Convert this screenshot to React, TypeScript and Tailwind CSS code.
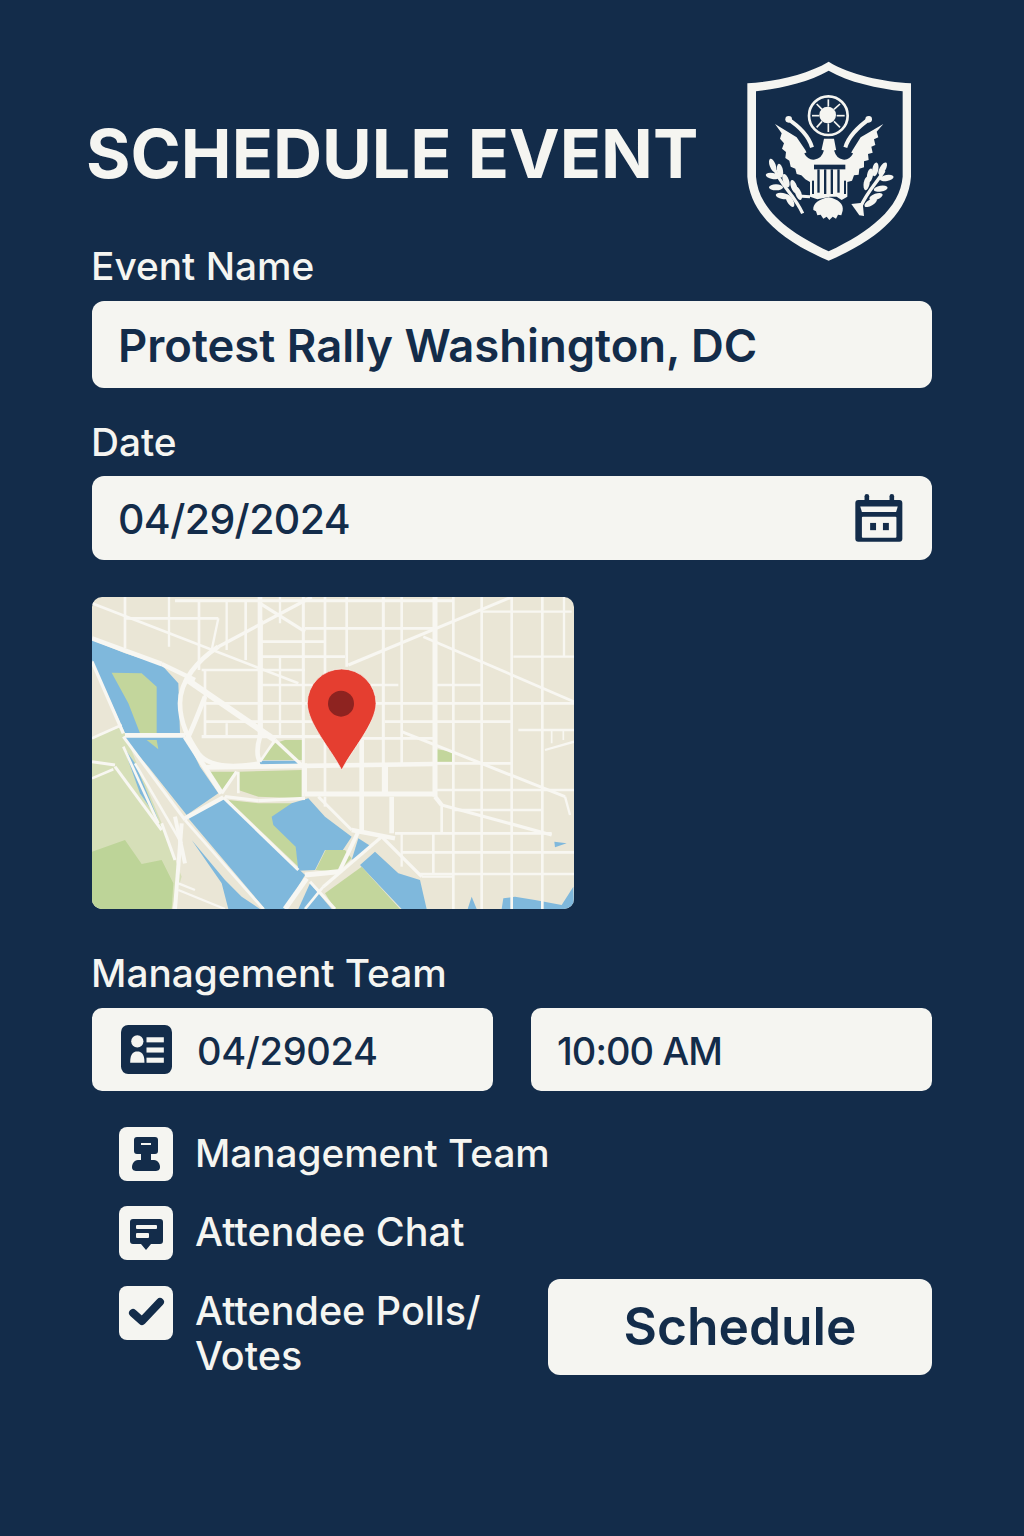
const NAVY = '#132c4a';
const PAPER = '#f5f5f1';
const ROAD = '#f8f7f2';

// street segments in map coords: [x1, y1, x2, y2, width]
const streets: number[][] = [
  // verticals
  [120, 21, 120, 175, 8], [252, 21, 252, 170, 7], [342, 30, 342, 240, 8], [425, 30, 425, 180, 7], [425, 400, 425, 440, 7],
  [482, 30, 482, 210, 8], [525, 21, 525, 440, 14], [585, 21, 585, 100, 7], [530, 90, 530, 440, 7], [585, 200, 585, 440, 7],
  [655, 21, 655, 620, 9], [720, 21, 720, 610, 8], [785, 21, 785, 230, 8], [830, 450, 830, 720, 14], [895, 21, 895, 610, 9],
  [950, 21, 950, 520, 8], [1050, 21, 1050, 620, 15], [1105, 21, 1105, 957, 8], [1190, 21, 1190, 957, 8], [1280, 21, 1280, 957, 8],
  [1372, 21, 1372, 957, 8], [1437, 21, 1437, 200, 7], [1435, 420, 1435, 450, 5], [1400, 420, 1400, 460, 5],
  [920, 620, 920, 730, 14], [1045, 730, 1045, 850, 8], [950, 730, 950, 830, 7], [1070, 640, 1070, 730, 8], [900, 530, 900, 610, 18],
  [360, 240, 360, 440, 8], [720, 620, 720, 650, 8], [660, 520, 660, 610, 12], [460, 545, 460, 610, 8],
  // horizontals
  [270, 32, 1105, 32, 9], [120, 85, 400, 85, 8], [660, 115, 1050, 115, 8], [530, 155, 720, 155, 8], [1190, 65, 1460, 65, 7],
  [530, 200, 780, 200, 8], [1285, 200, 1467, 200, 7], [350, 240, 660, 240, 8], [530, 285, 940, 285, 8], [1050, 285, 1190, 285, 7],
  [360, 340, 1467, 340, 8], [360, 395, 720, 395, 8], [900, 395, 1280, 395, 8], [120, 436, 300, 436, 14], [350, 440, 720, 440, 10],
  [720, 445, 1050, 445, 8], [1300, 420, 1467, 420, 7], [1380, 480, 1467, 455, 7], [360, 532, 1050, 522, 14], [1050, 520, 1280, 520, 8],
  [660, 612, 1050, 612, 15], [1050, 600, 1467, 600, 8], [1105, 660, 1372, 660, 7], [930, 730, 1400, 730, 8],
  [950, 787, 1467, 787, 8], [1000, 852, 1467, 852, 8], [21, 515, 90, 525, 9], [21, 565, 85, 538, 8],
  // diagonals
  [21, 40, 640, 280, 8], [21, 145, 230, 222, 14], [230, 222, 330, 270, 13], [300, 265, 570, 450, 18],
  [525, 40, 660, 125, 10], [400, 170, 680, 21, 10], [790, 225, 1280, 21, 9], [1015, 140, 1467, 335, 8], [950, 425, 1440, 620, 9],
  [1440, 620, 1455, 675, 7], [1050, 620, 1070, 645, 13], [1070, 645, 1400, 735, 10], [400, 85, 380, 180, 7],
  [570, 450, 525, 515, 8], [570, 450, 650, 525, 10], [300, 440, 410, 610, 15], [455, 545, 410, 610, 10], [21, 215, 115, 430, 10],
  [110, 405, 21, 445, 8], [115, 440, 300, 690, 9], [115, 470, 220, 700, 8], [150, 520, 290, 760, 8], [90, 530, 230, 720, 9],
  [300, 685, 415, 622, 13], [415, 622, 640, 840, 9], [300, 690, 535, 957, 8], [420, 620, 520, 632, 10], [520, 632, 660, 625, 10],
  [700, 620, 800, 720, 9], [800, 720, 930, 745, 13], [820, 725, 760, 850, 12], [890, 740, 715, 890, 10], [660, 855, 760, 845, 15],
  [665, 865, 600, 957, 15], [675, 875, 750, 957, 9], [715, 890, 660, 957, 8], [890, 740, 1010, 860, 10], [1010, 860, 1105, 860, 7],
  [290, 700, 270, 957, 12], [270, 680, 300, 820, 12], [230, 700, 270, 810, 9], [280, 880, 330, 900, 7], [280, 900, 420, 957, 7],
];

// the road loops that bend instead of running straight
const curvedRoads = [
  'M400 170 C340 210 285 270 285 340 C285 400 310 445 340 490 C370 530 440 535 525 520',
  'M360 320 C340 370 325 410 310 440',
  'M525 440 C515 470 515 500 525 515',
];

const Poly = ({ points, fill }: { points: string; fill: string }) => <polygon points={points} fill={fill} />;

const MapCard = () => (
  <div className="w-[482px] h-[312px] rounded-[10px] overflow-hidden">
    <svg viewBox="21 21 1446 936" className="w-full h-full block">
      <rect x="21" y="21" width="1446" height="936" fill="#eae6d6" />
      {/* parks */}
      <Poly fill="#d6dfb8" points="21,440 110,410 230,700 290,860 260,957 21,957" />
      <Poly fill="#bdd498" points="21,785 120,750 170,822 230,810 265,880 260,957 21,957" />
      <Poly fill="#c3d69c" points="460,545 650,540 650,625 520,620 460,600" />
      <Poly fill="#c3d69c" points="370,545 450,545 410,605" />
      <Poly fill="#c3d69c" points="570,460 600,450 655,450 655,510 525,510" />
      <Poly fill="#c3d69c" points="430,630 520,640 620,640 640,830" />
      <Poly fill="#c3d69c" points="1055,478 1105,485 1105,515 1055,515" />
      {/* water */}
      <Poly fill="#7fb8dc" points="21,150 120,190 230,225 280,280 285,430 120,430 21,210" />
      <Poly fill="#c3d69c" points="80,248 170,250 215,290 215,430 165,430 130,340" />
      <Poly fill="#7fb8dc" points="120,440 300,440 345,530 400,610 305,675 190,530 120,450" />
      <Poly fill="#c3d69c" points="185,450 215,450 220,478" />
      <Poly fill="#7fb8dc" points="115,470 150,520 220,690 165,610" />
      <Poly fill="#7fb8dc" points="310,685 415,625 660,855 600,957 540,957" />
      <Poly fill="#7fb8dc" points="320,750 420,870 470,920 525,957 430,957 410,880" />
      <Poly fill="#7fb8dc" points="675,880 740,957 640,957" />
      <Poly fill="#7fb8dc" points="560,680 620,640 670,625 720,680 800,740 770,785 720,780 690,840 640,842 632,770 565,705" />
      <Poly fill="#7fb8dc" points="820,745 860,770 800,810" />
      <Poly fill="#7fb8dc" points="870,785 940,850 1005,870 1025,957 950,957 825,825" />
      <Poly fill="#c3d69c" points="692,840 722,780 780,780 800,805 760,845" />
      <Poly fill="#c3d69c" points="720,910 830,830 945,957 750,957" />
      <Poly fill="#7fb8dc" points="520,512 635,512 640,525 530,527" />
      <Poly fill="#7fb8dc" points="1250,957 1255,925 1290,920 1350,930 1430,945 1465,890 1467,957" />
      <Poly fill="#7fb8dc" points="1148,957 1160,920 1175,957" />
      <Poly fill="#7fb8dc" points="1408,755 1445,760 1410,772" />
      {/* streets */}
      {streets.map(([x1, y1, x2, y2, w], i) => (
        <line key={i} x1={x1} y1={y1} x2={x2} y2={y2} stroke={ROAD} strokeWidth={w} />
      ))}
      {curvedRoads.map((d) => (
        <path key={d} d={d} fill="none" stroke={ROAD} strokeWidth="14" />
      ))}
      {/* pin */}
      <path
        d="M770 540 C740 480 667 400 667 340 A103 103 0 0 1 873 340 C873 400 800 480 770 540Z"
        fill="#e53e30"
        stroke={ROAD}
        strokeWidth="2"
      />
      <circle cx="768" cy="341" r="39" fill="#8e2320" />
    </svg>
  </div>
);

const leaves = (pts: number[][]) =>
  pts.map(([cx, cy, rot], i) => (
    <ellipse key={i} cx={cx} cy={cy} rx="21" ry="9" fill={PAPER} transform={`rotate(${rot} ${cx} ${cy})`} />
  ));

const Seal = () => (
  <svg viewBox="0 0 600 660" className="w-[200px] h-[220px] block">
    <path
      fillRule="evenodd"
      fill={PAPER}
      d="M296 35 C230 75 130 95 52 100 L52 380 C60 490 150 570 296 632 C440 570 535 490 543 380 L543 100 C460 95 360 75 296 35Z M296 62 C235 97 150 115 78 124 L78 380 C85 475 170 545 296 604 C420 545 510 475 518 380 L518 124 C445 115 355 97 296 62Z"
    />
    {/* wheel and sun */}
    <circle cx="295" cy="197" r="58" fill="none" stroke={PAPER} strokeWidth="8" />
    <circle cx="293" cy="195" r="25" fill={PAPER} />
    <g stroke={PAPER} strokeWidth="5">
      <line x1="295" y1="148" x2="295" y2="170" /><line x1="295" y1="220" x2="295" y2="246" />
      <line x1="246" y1="197" x2="268" y2="197" /><line x1="320" y1="197" x2="344" y2="197" />
      <line x1="260" y1="162" x2="276" y2="178" /><line x1="312" y1="214" x2="330" y2="232" />
      <line x1="330" y1="162" x2="312" y2="178" /><line x1="276" y1="214" x2="260" y2="232" />
    </g>
    {/* eagle body and wings */}
    <path
      fill={PAPER}
      d="M135 222 L200 262 L226 300 C236 328 270 328 275 298 L282 266 L312 266 L318 298 C324 328 356 328 368 300 L392 262 L460 222 L440 245 L445 262 L432 268 L436 285 L424 290 L428 308 L414 312 L416 330 L402 334 L402 352 L388 356 L386 374 L372 376 L366 392 L352 396 L352 440 L335 450 L320 440 L300 440 L262 448 L240 440 L240 396 L226 388 L214 376 L200 372 L196 356 L182 350 L178 332 L166 324 L168 306 L156 296 L162 280 L150 266 L155 250Z"
    />
    {/* shield on the breast */}
    <path fill={NAVY} d="M252 344 H346 V358 H252Z" />
    <g fill={NAVY}>
      <rect x="262" y="358" width="7" height="70" /><rect x="282" y="358" width="7" height="74" />
      <rect x="302" y="358" width="7" height="74" /><rect x="322" y="358" width="7" height="70" />
      <rect x="246" y="392" width="6" height="40" /><rect x="342" y="392" width="6" height="40" />
    </g>
    {/* raised claws */}
    <path d="M244 296 C236 262 212 232 174 208" fill="none" stroke={NAVY} strokeWidth="20" />
    <path d="M348 296 C358 262 384 232 420 206" fill="none" stroke={NAVY} strokeWidth="20" />
    <path d="M246 292 C236 258 212 232 172 206" fill="none" stroke={PAPER} strokeWidth="12" />
    <path d="M346 292 C356 258 382 232 422 204" fill="none" stroke={PAPER} strokeWidth="12" />
    <circle cx="176" cy="208" r="10" fill={PAPER} />
    <circle cx="416" cy="208" r="10" fill={PAPER} />
    <path d="M228 308 C240 330 268 328 276 300" fill="none" stroke={NAVY} strokeWidth="12" />
    <path d="M318 300 C326 328 352 330 364 308" fill="none" stroke={NAVY} strokeWidth="12" />
    {/* tail */}
    <path
      fill={PAPER}
      d="M296 442 C265 448 248 462 250 480 L258 484 L262 496 L272 494 L280 506 L290 500 L298 510 L308 500 L318 506 L324 494 L334 496 L338 482 C342 462 325 448 296 442Z"
    />
    {/* olive branch and arrows */}
    <path d="M135 360 C155 410 190 430 218 490" fill="none" stroke={PAPER} strokeWidth="10" />
    {leaves([
      [128, 346, 70], [128, 378, 10], [150, 362, 80], [138, 412, 0], [168, 392, 70],
      [158, 438, 10], [192, 410, 70], [180, 452, 60], [205, 430, 70],
    ])}
    <path d="M462 362 C440 400 415 420 392 470" fill="none" stroke={PAPER} strokeWidth="10" />
    {leaves([
      [458, 356, 120], [470, 384, 170], [436, 358, 100], [452, 416, 170], [420, 376, 100],
      [438, 440, 160], [410, 400, 100], [422, 458, 150],
    ])}
    <path fill={PAPER} d="M364 462 L398 458 L402 498 L388 496 Z" />
    <path d="M240 440 L205 438" stroke={PAPER} strokeWidth="9" />
  </svg>
);

const CalendarIcon = () => (
  <svg viewBox="72 42 144 146" className="w-[48px] h-[48px] block" fill={NAVY}>
    <rect x="72" y="60" width="143" height="127" rx="9" />
    <path d="M87 80 H201 L196 97 H92Z" fill={PAPER} />
    <rect x="92" y="111" width="105" height="64" rx="3" fill={PAPER} />
    <rect x="117" y="130" width="18" height="22" />
    <rect x="156" y="130" width="18" height="22" />
    <rect x="100" y="42" width="14" height="30" rx="7" />
    <rect x="176" y="42" width="14" height="30" rx="7" />
  </svg>
);

const ContactIcon = () => (
  <svg viewBox="0 0 50 48" className="w-[51px] h-[49px] block">
    <rect width="50" height="48" rx="7" fill={NAVY} />
    <circle cx="16" cy="16" r="6" fill={PAPER} />
    <path d="M9 37 C9 28 12 26 16 26 C20 26 23 28 23 37Z" fill={PAPER} />
    <rect x="25" y="12" width="17" height="5" fill={PAPER} />
    <rect x="25" y="22" width="17" height="5" fill={PAPER} />
    <rect x="25" y="32" width="17" height="5" fill={PAPER} />
  </svg>
);

const TeamIcon = () => (
  <svg viewBox="0 0 54 54" className="w-[54px] h-[54px] block">
    <path
      fill={NAVY}
      d="M15 13 a3 3 0 0 1 3 -3 H36 a3 3 0 0 1 3 3 V24 a3 3 0 0 1 -3 3 H32 V33 H35 C39 33 41 37 41 40 C41 43 39 44 36 44 H18 C15 44 13 43 13 40 C13 37 15 33 19 33 H22 V27 H18 a3 3 0 0 1 -3 -3Z"
    />
    <rect x="22" y="16" width="10" height="2" fill={PAPER} />
  </svg>
);

const ChatIcon = () => (
  <svg viewBox="0 0 54 54" className="w-[54px] h-[54px] block">
    <path
      fill={NAVY}
      d="M14 13 H41 a3 3 0 0 1 3 3 V35 a3 3 0 0 1 -3 3 H32 L27 44 L22 38 H14 a3 3 0 0 1 -3 -3 V16 a3 3 0 0 1 3 -3Z"
    />
    <rect x="17" y="19" width="21" height="4" rx="1" fill={PAPER} />
    <rect x="17" y="27" width="13" height="5" rx="1" fill={PAPER} />
  </svg>
);

const CheckIcon = () => (
  <svg viewBox="0 0 54 54" className="w-[54px] h-[54px] block">
    <path d="M14 27 L23 35 L41 16" fill="none" stroke={NAVY} strokeWidth="8" strokeLinecap="round" strokeLinejoin="round" />
  </svg>
);

const Tile = ({ children }: { children: React.ReactNode }) => (
  <div className="w-[54px] h-[54px] shrink-0 rounded-[8px] bg-[#f5f5f1] flex items-center justify-center">{children}</div>
);

const App = () => (
  <div className="w-[1024px] h-[1536px] bg-[#132c4a] px-[92px] font-['Inter',sans-serif] text-[#f5f5f1] overflow-hidden">
    <header className="h-[234px] pt-[113px] relative">
      <h1 className="-ml-[6px] text-[68px] leading-[80px] font-bold whitespace-nowrap">SCHEDULE EVENT</h1>
      <div className="absolute left-[638px] top-[50px]">
        <Seal />
      </div>
    </header>
    <div className="-ml-px text-[38.8px] leading-[64px] font-medium h-[67px]">Event Name</div>
    <div className="h-[87px] rounded-[12px] bg-[#f5f5f1] px-[26px] pt-[3px] flex items-center text-[#132c4a] text-[45.4px] font-semibold">
      Protest Rally Washington, DC
    </div>
    <div className="-ml-px text-[38.8px] leading-[64px] mt-[22px] h-[66px] font-medium">Date</div>
    <div className="h-[84px] rounded-[12px] bg-[#f5f5f1] pl-[26px] pr-[29px] flex items-center justify-between text-[#132c4a] text-[41px] tracking-[-0.6px] font-medium">
      <span className="mt-[3px]">04/29/2024</span>
      <CalendarIcon />
    </div>
    <div className="mt-[37px]">
      <MapCard />
    </div>
    <div className="-ml-px text-[38.8px] leading-[64px] mt-[32px] h-[67px] font-medium">Management Team</div>
    <div className="flex justify-between text-[#132c4a] text-[38px] font-medium">
      <div className="w-[401px] h-[83px] rounded-[10px] bg-[#f5f5f1] pl-[29px] flex items-center gap-[25px]">
        <ContactIcon />
        <span className="mt-[3px] tracking-[-0.3px]">04/29024</span>
      </div>
      <div className="w-[401px] h-[83px] rounded-[10px] bg-[#f5f5f1] pl-[26px] pt-[3px] flex items-center tracking-tight">10:00 AM</div>
    </div>
    <div className="flex justify-between mt-[36px]">
      <ul className="w-[456px] pl-[27px] flex flex-col text-[39.5px] font-medium leading-[45px] whitespace-nowrap">
        <li className="flex items-center gap-[22px] h-[54px] text-[38.7px]">
          <Tile><TeamIcon /></Tile>
          <span className="-mt-[2px]">Management Team</span>
        </li>
        <li className="flex items-center gap-[22px] h-[54px] mt-[25px]">
          <Tile><ChatIcon /></Tile>
          <span className="-mt-[2px]">Attendee Chat</span>
        </li>
        <li className="flex items-start gap-[22px] mt-[26px]">
          <Tile><CheckIcon /></Tile>
          <span className="mt-[3px]">Attendee Polls/<br />Votes</span>
        </li>
      </ul>
      <button className="self-end shrink-0 mb-[4px] w-[384px] h-[96px] rounded-[12px] bg-[#f5f5f1] text-[#132c4a] text-[51.5px] font-semibold">Schedule</button>
    </div>
  </div>
);

export default App;
